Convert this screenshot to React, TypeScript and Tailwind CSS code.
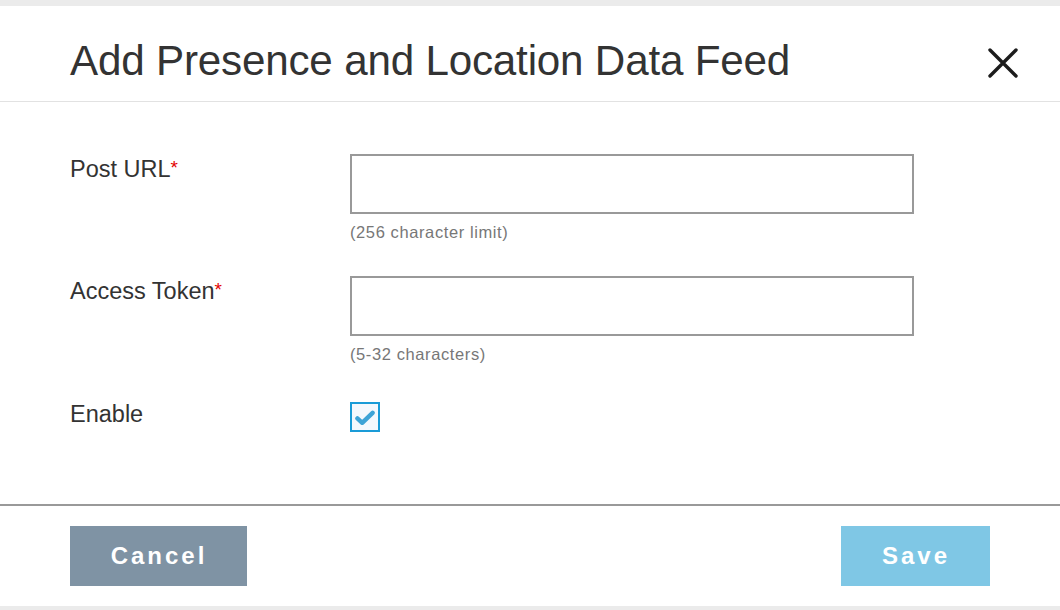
export default function App() {
  const font = { fontFamily: '"Liberation Sans", Arial, sans-serif' }
  return (
    <div className="w-[1060px] h-[610px] bg-[#ebebeb] pt-[6px]" style={font}>
      <div className="bg-white h-[600px] flex flex-col">
        {/* Header */}
        <div className="h-[96px] border-b border-[#e2e2e2] flex items-start justify-between pl-[70px] pr-[42px]">
          <h1 className="text-[42.2px] text-[#333] leading-none tracking-[-0.2px] mt-[34px]">Add Presence and Location Data Feed</h1>
          <button className="w-[30px] h-[30px] mt-[42px]" aria-label="Close">
            <svg viewBox="0 0 30 30" className="w-[30px] h-[30px]">
              <path d="M2 2 L28 28 M28 2 L2 28" stroke="#1c1c1c" strokeWidth="3.4" strokeLinecap="round" />
            </svg>
          </button>
        </div>

        {/* Body */}
        <div className="h-[404px] border-b-2 border-[#999] pl-[70px] pt-[52px] flex flex-col">
          <div className="flex">
            <label className="w-[280px] text-[23.5px] text-[#333] leading-[28px] pt-[1px]">
              Post URL<span className="text-[#e30000] text-[19px] relative top-[-3px]">*</span>
            </label>
            <div className="flex flex-col">
              <input className="w-[564px] h-[60px] border-2 border-[#999] outline-none px-3 text-[20px]" />
              <span className="text-[16.5px] text-[#777] tracking-[0.6px] mt-[8px] leading-[20px]">(256 character limit)</span>
            </div>
          </div>

          <div className="flex mt-[34px]">
            <label className="w-[280px] text-[23.5px] text-[#333] leading-[28px] pt-[1px]">
              Access Token<span className="text-[#e30000] text-[19px] relative top-[-3px]">*</span>
            </label>
            <div className="flex flex-col">
              <input className="w-[564px] h-[60px] border-2 border-[#999] outline-none px-3 text-[20px]" />
              <span className="text-[16.5px] text-[#777] tracking-[0.6px] mt-[8px] leading-[20px]">(5-32 characters)</span>
            </div>
          </div>

          <div className="flex mt-[38px]">
            <label className="w-[280px] text-[23.5px] text-[#333] leading-[28px] mt-[-2px]">Enable</label>
            <div className="w-[30px] h-[30px] border-2 border-[#1a9bd7] bg-[#f4f8fd] flex items-center justify-center">
              <svg viewBox="0 0 20 16" className="w-[20px] h-[16px] mt-[1px]">
                <path d="M2.4 8.4 L7.2 12.8 L17.6 2.8" stroke="#3ea3d6" strokeWidth="4.4" fill="none" strokeLinecap="round" strokeLinejoin="round" />
              </svg>
            </div>
          </div>
        </div>

        {/* Footer */}
        <div className="flex justify-between items-start px-[70px] pt-[20px]">
          <button className="w-[177px] h-[60px] bg-[#7f93a4] text-white text-[24px] font-bold tracking-[3px] pl-[1px]">Cancel</button>
          <button className="w-[149px] h-[60px] bg-[#7fc7e5] text-white text-[24px] font-bold tracking-[3px] pl-[1px]">Save</button>
        </div>
      </div>
    </div>
  )
}
